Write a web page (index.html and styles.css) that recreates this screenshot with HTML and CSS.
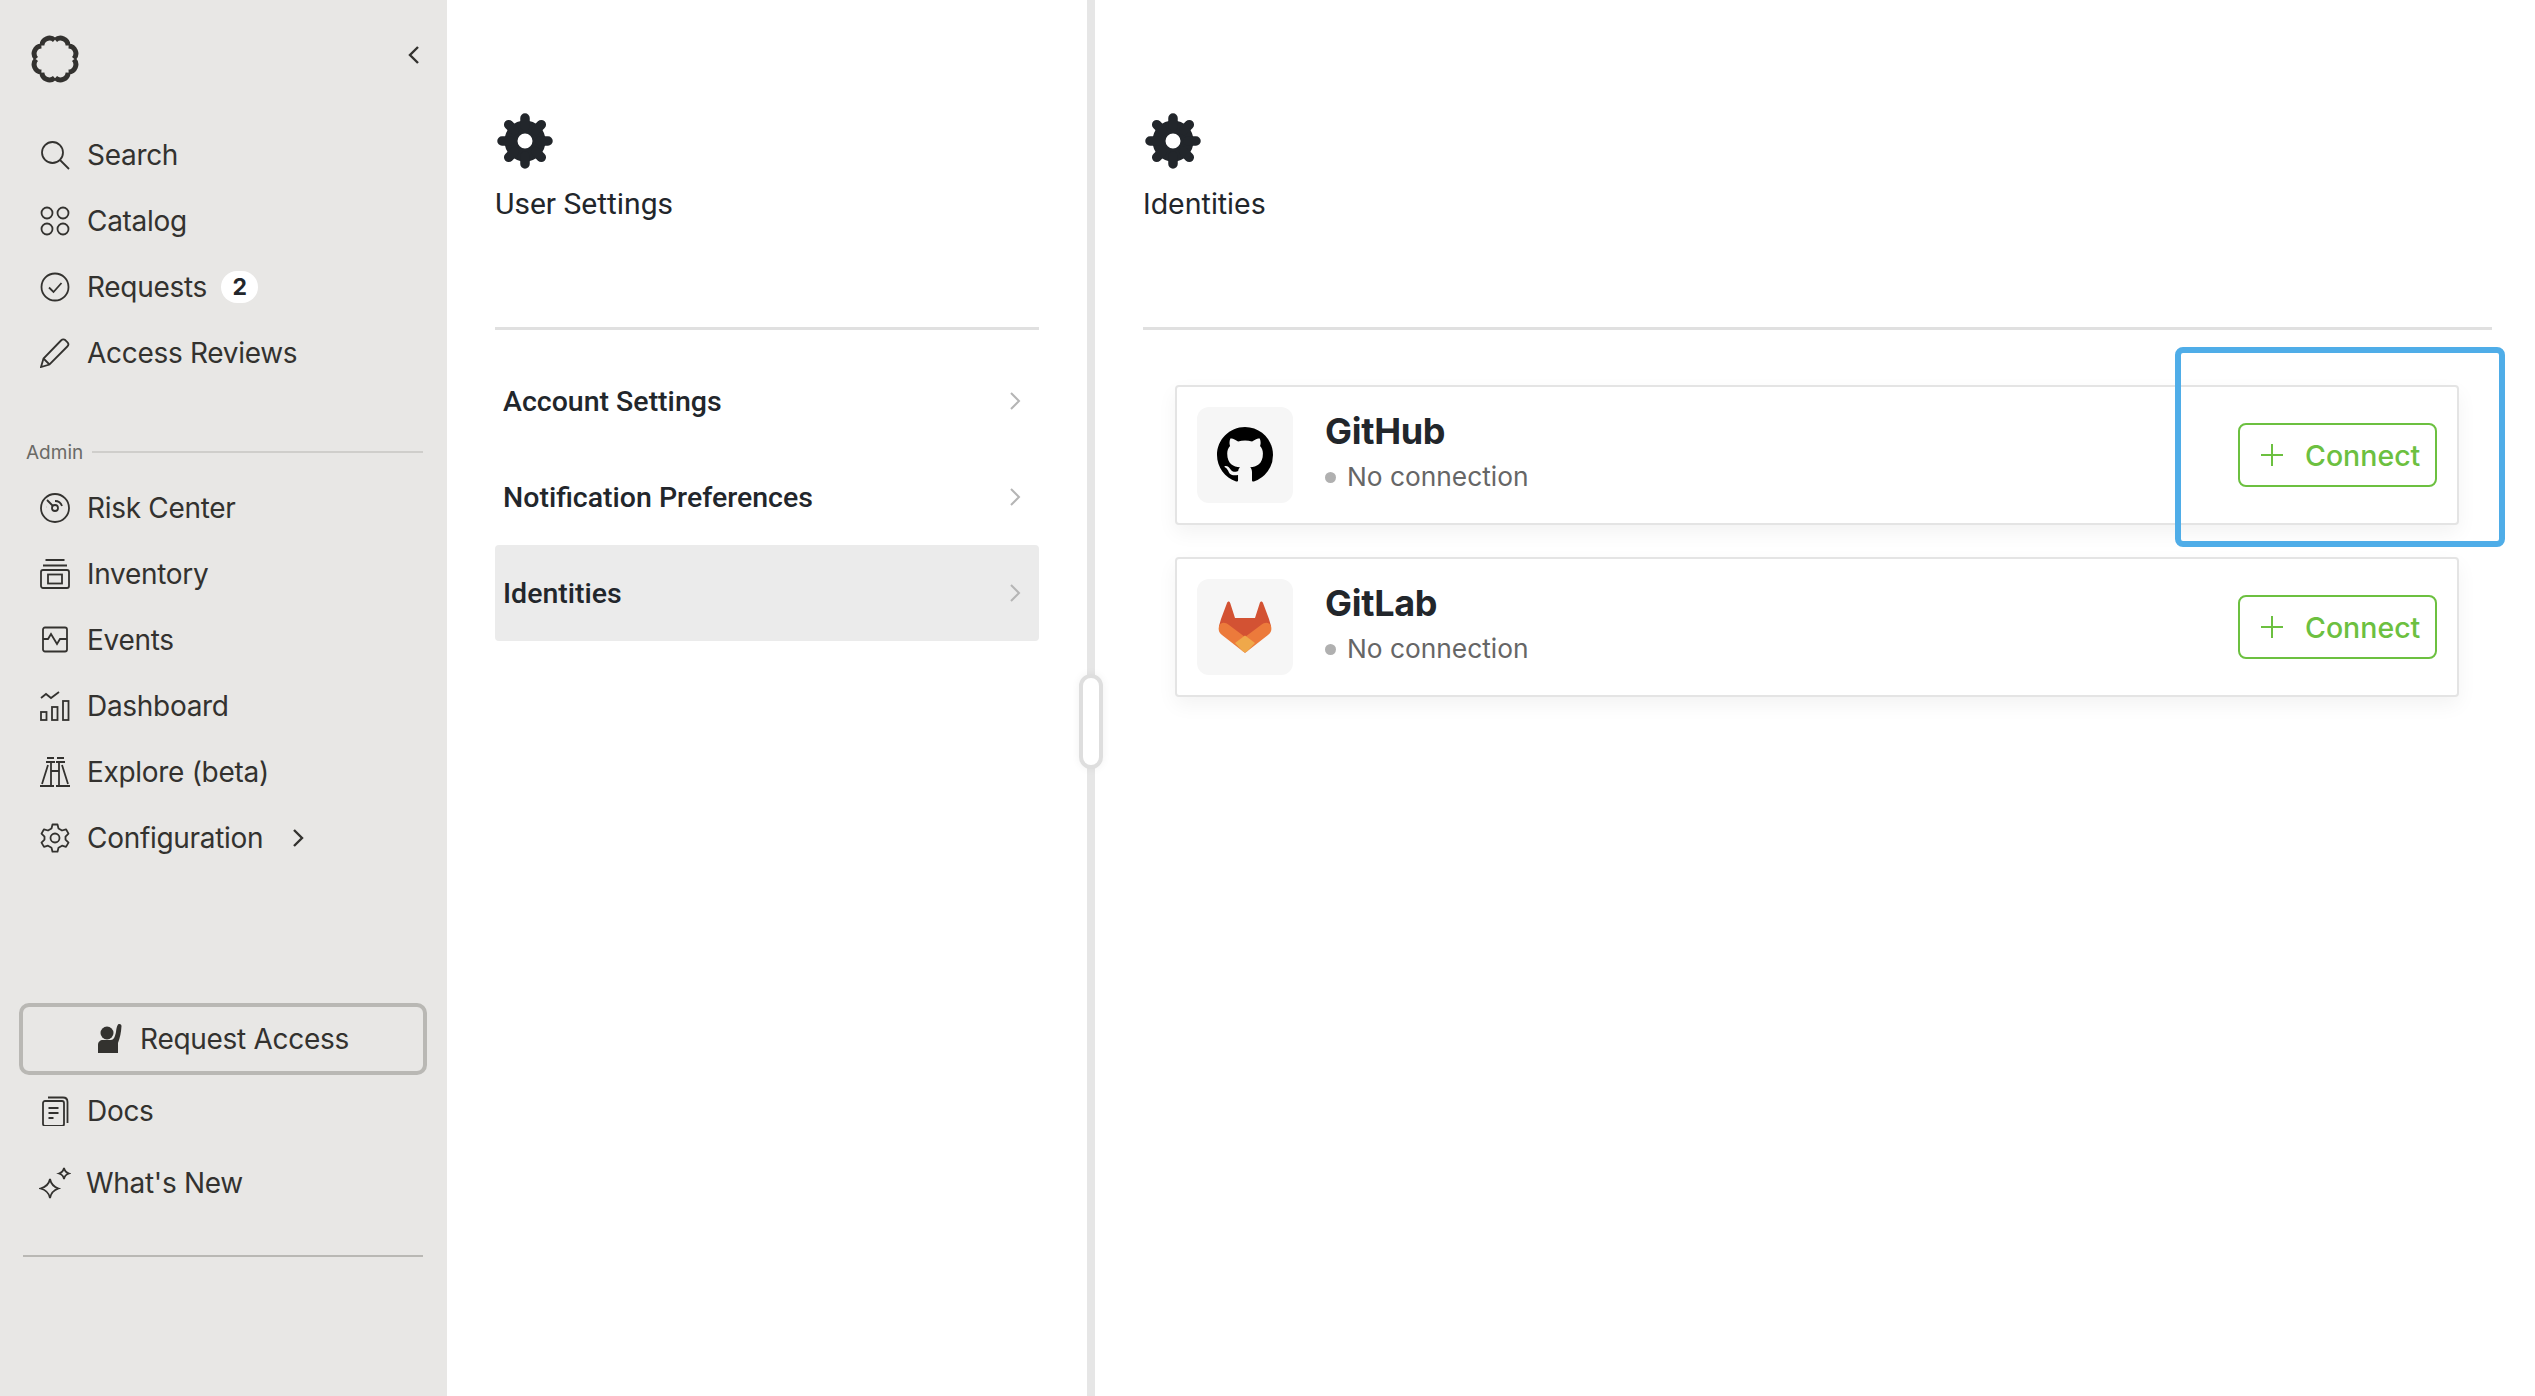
FILE: index.html
```html
<!DOCTYPE html>
<html lang="en">
<head>
    <meta charset="UTF-8">
    <title>Identities</title>
    <link rel="stylesheet" href="styles.css">
</head>
<body>

<svg class="defs" width="0" height="0">
    <symbol id="gear" viewBox="0 0 56 56">
        <circle cx="28" cy="28" r="14" fill="none" stroke="#22262b" stroke-width="13"/>
        <g stroke="#22262b" stroke-width="9.500" stroke-linecap="round">
            <path d="M28 5v8M28 51v-8M5 28h8M51 28h-8M11.700 11.700l5.700 5.700M44.300 44.300l-5.700-5.700M11.700 44.300l5.700-5.700M44.300 11.700l-5.700 5.700"/>
        </g>
    </symbol>
</svg>

<div class="app">

    <!-- Sidebar -->
    <aside class="sidebar">
        <div class="brand">
            <svg class="logo" viewBox="0 0 50 50" fill="none" stroke="#33322f" stroke-width="5">
                <path pathLength="8" stroke-dasharray="0.94 0.06" stroke-dashoffset="-0.03" d="M25 6.500A7.600 7.600 0 0 1 38.100 11.900A7.600 7.600 0 0 1 43.500 25A7.600 7.600 0 0 1 38.100 38.100A7.600 7.600 0 0 1 25 43.500A7.600 7.600 0 0 1 11.900 38.100A7.600 7.600 0 0 1 6.500 25A7.600 7.600 0 0 1 11.900 11.900A7.600 7.600 0 0 1 25 6.500z"/>
            </svg>
            <svg class="collapse" viewBox="0 0 12 20" fill="none" stroke="#33322f" stroke-width="2.400"><path d="M10 2L2 10l8 8"/></svg>
        </div>

        <nav class="nav nav-top">
            <a class="nav-item">
                <svg class="nav-icon" viewBox="0 0 30 30"><circle cx="12.500" cy="12.500" r="10.500"/><path d="M20 20l9 9"/></svg>
                <span>Search</span>
            </a>
            <a class="nav-item">
                <svg class="nav-icon" viewBox="0 0 30 30"><circle cx="7" cy="7" r="5.500"/><circle cx="23" cy="7" r="5.500"/><circle cx="7" cy="23" r="5.500"/><circle cx="23" cy="23" r="5.500"/></svg>
                <span>Catalog</span>
            </a>
            <a class="nav-item">
                <svg class="nav-icon" viewBox="0 0 30 30"><circle cx="15" cy="15" r="13.500"/><path d="M9 15.500l4.500 4.500 8-9"/></svg>
                <span>Requests</span>
                <b class="badge">2</b>
            </a>
            <a class="nav-item">
                <svg class="nav-icon" viewBox="0 0 30 30"><path d="M1 29l2.500-8.500L21 2.500c1.500-1.500 3-1.500 4.500-.2l2 2c1.300 1.400 1 3-.2 4.200L9.500 26.500z"/><path d="M3.500 20.500l6 6"/></svg>
                <span>Access Reviews</span>
            </a>
        </nav>

        <div class="section-label">
            <span>Admin</span>
            <i class="section-rule"></i>
        </div>

        <nav class="nav">
            <a class="nav-item">
                <svg class="nav-icon" viewBox="0 0 30 30"><circle cx="15" cy="15" r="14"/><circle cx="15" cy="15" r="3"/><path d="M7 7l6 6M15 8c3 0 6 2 7 5M6 14h.1"/></svg>
                <span>Risk Center</span>
            </a>
            <a class="nav-item">
                <svg class="nav-icon" viewBox="0 0 30 30"><path d="M5.500 1h19M3 6.500h24"/><rect x="1" y="11" width="28" height="18" rx="2"/><rect x="8" y="15.500" width="14" height="9"/></svg>
                <span>Inventory</span>
            </a>
            <a class="nav-item">
                <svg class="nav-icon" viewBox="0 0 30 30"><rect x="3" y="2.500" width="24" height="24" rx="2"/><path d="M3 14h5l3-5 6 10 3-5h7"/></svg>
                <span>Events</span>
            </a>
            <a class="nav-item">
                <svg class="nav-icon" viewBox="0 0 30 30"><path d="M1 7l5-4 5 4 8-6"/><rect x="1" y="21" width="5.500" height="8"/><rect x="12" y="16" width="5.500" height="13"/><rect x="23" y="10" width="5.500" height="19"/></svg>
                <span>Dashboard</span>
            </a>
            <a class="nav-item">
                <svg class="nav-icon" viewBox="0 0 30 30"><path d="M7 1h7M17 1h7M6 5h9M16 5h9M0 29h14M16 29h14M2 27L8 8M28 27L22 8M11 5v23M19 5v23M11 14h8"/></svg>
                <span>Explore (beta)</span>
            </a>
            <a class="nav-item">
                <svg class="nav-icon" viewBox="0 0 30 30"><circle cx="15" cy="15" r="4.500"/><path d="M12.500 1.500h5l1 4 3.500 2 4-1.200 2.500 4.300-3 3v3l3 3-2.500 4.300-4-1.200-3.500 2-1 4h-5l-1-4-3.500-2-4 1.200L1.500 19.600l3-3v-3l-3-3L4 6.300l4 1.200 3.500-2z" stroke-linejoin="round"/></svg>
                <span>Configuration</span>
                <svg class="nav-caret" viewBox="0 0 12 20" fill="none"><path d="M2 2l8 8-8 8"/></svg>
            </a>
        </nav>

        <button class="request-btn">
            <svg class="request-icon" viewBox="0 0 26 30" fill="#33322f"><circle cx="10" cy="9" r="6.500"/><path d="M19 8c.3-3 .8-6 2-7.500 1.500-1 3.500-.2 3.500 1.500-.3 6-1.500 12-3.500 17v10H1V21c0-3 2-5 5-5h8c2.500 0 4-3 5-8z"/></svg>
            Request Access
        </button>

        <nav class="nav">
            <a class="nav-item nav-item-tall">
                <svg class="nav-icon" viewBox="0 0 30 30"><rect x="3" y="5" width="21" height="25" rx="2"/><path d="M8 1.500h15c3 0 4.500 1.500 4.500 4.500v21M8.500 12h10M8.500 17h10M8.500 22h5"/></svg>
                <span>Docs</span>
            </a>
            <a class="nav-item nav-item-tall nav-item-new">
                <svg class="nav-icon" viewBox="0 0 32 32"><path d="M11 12c1 5 4 8 8.500 9.500-4.500 1.500-7.500 4-8.500 9.500-1-5.500-4-8-9.500-9.500C7 20 10 17 11 12zM25 1c.5 3 2 4.500 5 5.500-3 1-4.500 2.500-5 5.500-.5-3-2-4.500-5-5.500 3-1 4.500-2.500 5-5.500z"/></svg>
                <span>What's New</span>
            </a>
        </nav>

        <hr class="sidebar-rule">
    </aside>

    <!-- Settings menu -->
    <section class="panel panel-menu">
        <svg class="gear"><use href="#gear"/></svg>
        <h2 class="panel-title">User Settings</h2>
        <hr class="panel-rule">
        <ul class="menu">
            <li class="menu-item">Account Settings <svg class="menu-caret" viewBox="0 0 12 20"><path d="M2 2l8 8-8 8"/></svg></li>
            <li class="menu-item">Notification Preferences <svg class="menu-caret" viewBox="0 0 12 20"><path d="M2 2l8 8-8 8"/></svg></li>
            <li class="menu-item active">Identities <svg class="menu-caret" viewBox="0 0 12 20"><path d="M2 2l8 8-8 8"/></svg></li>
        </ul>
    </section>

    <div class="splitter"><div class="splitter-handle"></div></div>

    <!-- Identities -->
    <section class="panel panel-main">
        <svg class="gear"><use href="#gear"/></svg>
        <h2 class="panel-title panel-title-main">Identities</h2>
        <hr class="panel-rule">

        <div class="cards">
            <div class="card">
                <div class="card-logo">
                    <svg viewBox="0 0 16 16" width="56" height="56" fill="#000"><path d="M8 0C3.580 0 0 3.580 0 8c0 3.540 2.290 6.530 5.470 7.590.4.070.55-.17.55-.38 0-.19-.01-.82-.01-1.490-2.010.37-2.530-.49-2.690-.94-.09-.23-.48-.94-.82-1.130-.28-.15-.68-.52-.01-.53.630-.01 1.080.58 1.230.82.720 1.210 1.870.87 2.330.66.070-.52.280-.87.510-1.070-1.780-.2-3.640-.89-3.640-3.950 0-.87.310-1.590.820-2.150-.08-.2-.36-1.020.08-2.120 0 0 .67-.21 2.200.82.640-.18 1.320-.27 2-.27.680 0 1.360.09 2 .27 1.530-1.040 2.200-.82 2.200-.82.440 1.100.160 1.920.08 2.120.510.560.820 1.270.820 2.150 0 3.070-1.870 3.750-3.650 3.950.290.250.540.730.540 1.480 0 1.070-.01 1.930-.01 2.200 0 .210.150.460.550.380A8.010 8.010 0 0 0 16 8c0-4.420-3.580-8-8-8z"/></svg>
                </div>
                <div class="card-text">
                    <div class="card-name">GitHub</div>
                    <div class="card-status"><i class="status-dot"></i>No connection</div>
                </div>
                <button class="connect-btn"><svg class="connect-plus" viewBox="0 0 22 22"><path d="M11 0v22M0 11h22"/></svg>Connect</button>
            </div>
            <div class="card">
                <div class="card-logo">
                    <svg viewBox="0 0 54 52" width="54" height="52">
                        <path fill="#d35233" d="M9 2c.8-2 2.500-2 3.200 0L17 17h20l4.800-15c.7-2 2.400-2 3.200 0l6 16 2 7L27 46 1 25l2-7z"/>
                        <path fill="#ec7a3b" d="M1 25c-1 4 0 7 3 9l23 18V36L11 24C7 21 3 21 1 25zM53 25c1 4 0 7-3 9L27 52V36l16-12c4-3 8-3 10 1z"/>
                        <path fill="#efa84a" d="M17 42l10-7.500L37 42l-8 8.500c-1.200 1-2.800 1-4 0z"/>
                    </svg>
                </div>
                <div class="card-text">
                    <div class="card-name">GitLab</div>
                    <div class="card-status"><i class="status-dot"></i>No connection</div>
                </div>
                <button class="connect-btn"><svg class="connect-plus" viewBox="0 0 22 22"><path d="M11 0v22M0 11h22"/></svg>Connect</button>
            </div>
        </div>

        <div class="highlight"></div>
    </section>
</div>

</body>
</html>
```

FILE: styles.css
```css
* {
    box-sizing: border-box;
}
html, body {
    height: 100%;
}
body {
    margin: 0;
    background: #fff;
    font-family: "Inter", "Liberation Sans", sans-serif;
    color: #33322f;
    overflow: hidden;
}
.defs {
    position: absolute;
}
.app {
    display: flex;
    height: 1396px;
}

/* sidebar */
.sidebar {
    width: 447px;
    flex: none;
    background: #e8e7e5;
    padding: 0 24px 0 20px;
}
.brand {
    display: flex;
    align-items: center;
    justify-content: space-between;
    padding: 34px 3px 0 10px;
    height: 84px;
}
.logo {
    width: 50px;
    height: 50px;
}
.collapse {
    width: 12px;
    height: 20px;
    margin-top: -8px;
}
.nav {
    display: flex;
    flex-direction: column;
    padding-left: 20px;
}
.nav-top {
    padding-top: 38px;
}
.nav-item {
    display: flex;
    align-items: center;
    height: 66px;
    font-size: 28px;
    letter-spacing: -0.3px;
    color: #33322f;
}
.nav-icon {
    width: 30px;
    height: 30px;
    margin-right: 17px;
    flex: none;
    fill: none;
    stroke: #33322f;
    stroke-width: 1.8;
}
.badge {
    margin-left: 14px;
    width: 37px;
    height: 32px;
    border-radius: 16px;
    background: #fff;
    font-size: 23px;
    font-weight: 700;
    line-height: 32px;
    text-align: center;
    color: #22262b;
}
.nav-caret {
    width: 12px;
    height: 20px;
    margin-left: 29px;
    stroke: #33322f;
    stroke-width: 2.400;
}
.section-label {
    display: flex;
    align-items: center;
    margin: 56px 0 13px 6px;
    height: 20px;
    font-size: 19px;
    color: #6b6a66;
}
.section-rule {
    flex: 1;
    height: 2px;
    margin-left: 9px;
    background: #cfcecb;
}
.request-btn {
    display: flex;
    align-items: center;
    justify-content: center;
    width: 408px;
    height: 72px;
    margin: 132px 0 0 -1px;
    border: 4px solid #b9b8b4;
    border-radius: 10px;
    background: transparent;
    font-family: inherit;
    font-size: 28px;
    letter-spacing: -0.3px;
    color: #33322f;
}
.request-icon {
    width: 26px;
    height: 30px;
    margin-right: 17px;
}
.nav-item-tall {
    height: 72px;
}
.nav-item-new .nav-icon {
    width: 32px;
    height: 32px;
    margin: 0 15px 0 -1px;
}
.sidebar-rule {
    margin: 36px 0 0 3px;
    border: 0;
    height: 2px;
    background: #b9b8b4;
}

/* panels */
.panel {
    position: relative;
    padding-top: 113px;
}
.panel-menu {
    width: 640px;
    flex: none;
    padding-left: 48px;
    padding-right: 48px;
}
.panel-main {
    flex: 1;
    padding-left: 48px;
    padding-right: 43px;
}
.gear {
    display: block;
    width: 56px;
    height: 56px;
    margin-left: 2px;
}
.panel-title {
    margin: 15px 0 0;
    font-size: 30px;
    line-height: 40px;
    font-weight: 400;
    font-family: "Roboto", sans-serif;
    color: #22262b;
}
.panel-title-main {
    font-family: "Inter", sans-serif;
    font-size: 28.500px;
}
.panel-rule {
    margin: 103px 0 0;
    border: 0;
    height: 3px;
    background: #e0e0e0;
}
.splitter {
    width: 8px;
    flex: none;
    background: #e6e6e6;
    display: flex;
    align-items: center;
    justify-content: center;
    padding-top: 46px;
}
.splitter-handle {
    width: 24px;
    height: 95px;
    flex: none;
    background: #fff;
    border: 4px solid #dedede;
    border-radius: 12px;
    box-shadow: 0 0 8px rgba(0, 0, 0, 0.06);
}

/* settings menu */
.menu {
    list-style: none;
    margin: 23px 0 0;
    padding: 0;
}
.menu-item {
    display: flex;
    align-items: center;
    justify-content: space-between;
    height: 96px;
    padding: 0 18px 0 8px;
    font-family: "Roboto", sans-serif;
    font-size: 28.500px;
    font-weight: 500;
    color: #22262b;
    border-radius: 4px;
}
.menu-item.active {
    background: #ebebeb;
}
.menu-caret {
    width: 12px;
    height: 20px;
    fill: none;
    stroke: #b5b5b5;
    stroke-width: 2;
}

/* identity cards */
.cards {
    padding: 55px 33px 0 32px;
    display: flex;
    flex-direction: column;
    gap: 32px;
}
.card {
    display: flex;
    align-items: center;
    height: 140px;
    padding: 0 20px;
    background: #fff;
    border: 2px solid #e4e4e4;
    border-radius: 4px;
    box-shadow: 0 8px 20px rgba(0, 0, 0, 0.05);
}
.card-logo {
    width: 96px;
    height: 96px;
    flex: none;
    display: flex;
    align-items: center;
    justify-content: center;
    background: #f6f6f6;
    border-radius: 12px;
}
.card-text {
    flex: 1;
    margin-left: 32px;
    padding-bottom: 6px;
}
.card-name {
    font-size: 36px;
    line-height: 42px;
    font-weight: 700;
    letter-spacing: -0.3px;
    color: #22262b;
}
.card-status {
    display: flex;
    align-items: center;
    margin-top: 8px;
    font-size: 26.300px;
    line-height: 34px;
    color: #666;
}
.status-dot {
    width: 11px;
    height: 11px;
    margin-right: 11px;
    border-radius: 50%;
    background: #b0b0b0;
}
.connect-btn {
    display: flex;
    align-items: center;
    width: 199px;
    height: 64px;
    padding: 0 14px 0 21px;
    background: #fff;
    border: 2px solid #6cc040;
    border-radius: 8px;
    font-family: inherit;
    font-size: 28.500px;
    font-weight: 500;
    color: #6cc040;
}
.connect-plus {
    width: 22px;
    height: 22px;
    margin-right: 22px;
    flex: none;
    fill: none;
    stroke: #6cc040;
    stroke-width: 2;
}

/* blue callout round the first connect button */
.highlight {
    position: absolute;
    left: 1080px;
    top: 347px;
    width: 330px;
    height: 200px;
    border: 6px solid #4fade8;
    border-radius: 8px;
}
```
